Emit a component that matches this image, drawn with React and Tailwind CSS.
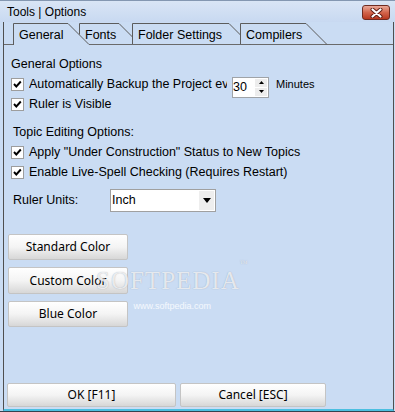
import React from 'react'

const TABS = [
  { label: 'General', w: 55, box: 'w-[77px] ml-[9px] z-20', selected: true },
  { label: 'Fonts', w: 40, box: 'w-[62px] -ml-[11px] z-[3]' },
  { label: 'Folder Settings', w: 97, box: 'w-[119px] -ml-[9px] z-[4]' },
  { label: 'Compilers', w: 66, box: 'w-[88px] -ml-[11px] z-[5]' },
]

function Tab({ label, w, box, selected }) {
  const h = selected ? 23 : 22
  return (
    <div className={`relative h-[23px] shrink-0 flex items-center pl-[6px] pt-[3px] ${box}`}>
      <svg className="absolute left-0 top-0" width={w + 22} height="23">
        <path d={`M0,${h} L0,1 L${w},1 L${w + 21},22 L${w + 21},${h} Z`} fill="#cadcf3" />
        <path d={`M0.5,${h} L0.5,1.5 L${w},1.5 L${w + 21},22.5`} fill="none" stroke="#5c5c5c" />
      </svg>
      <span className="relative text-[12.5px] leading-none">{label}</span>
    </div>
  )
}

function CheckBox() {
  return (
    <div className="w-[13px] h-[13px] shrink-0 bg-white border border-[#9d9d9d] flex items-center justify-center">
      <svg width="11" height="11" viewBox="0 0 11 11">
        <path d="M2,5 L4.3,7.5 L8.8,2.5" fill="none" stroke="#000" strokeWidth="1.9" />
      </svg>
    </div>
  )
}

function CheckRow({ children }) {
  return (
    <div className="h-[20px] flex items-center gap-[5px] text-[12.5px] whitespace-nowrap">
      <CheckBox />
      {children}
    </div>
  )
}

function WinButton({ children, className }) {
  return (
    <button
      className={`flex items-center justify-center border border-[#c4c4c4] rounded-[2px] bg-gradient-to-b from-white via-[#f4f4f4] to-[#d7d7d7] text-[12px] text-black font-['Noto_Sans',sans-serif] ${className}`}
    >
      {children}
    </button>
  )
}

export default function App() {
  return (
    <div className="relative w-[395px] h-[412px] flex flex-col overflow-hidden bg-[#cadcf3] border-b border-[#34424f] font-['Liberation_Sans',Arial,sans-serif] text-black">
      {/* title bar */}
      <div className="h-[22px] shrink-0 flex items-center justify-between pl-[7px] pr-[5px] border-t border-[#8497b1] bg-gradient-to-b from-[#d9e5f5] to-[#c8d9f1]">
        <span className="text-[12px] leading-none">Tools | Options</span>
        <button className="w-[28px] h-[15px] mt-[2px] flex items-center justify-center rounded-[3px] border border-[#6e2b20] bg-gradient-to-b from-[#e9a898] via-[#d2654c] to-[#b8381f]">
          <svg width="13" height="10" viewBox="0 0 13 10">
            <path d="M2.5,1.5 L10.5,8.5 M10.5,1.5 L2.5,8.5" stroke="#5a1a10" strokeWidth="4" strokeLinecap="round" />
            <path d="M2.5,1.5 L10.5,8.5 M10.5,1.5 L2.5,8.5" stroke="#fff" strokeWidth="2.2" strokeLinecap="round" />
          </svg>
        </button>
      </div>

      <div className="flex-1 flex flex-col ml-[3px] mr-[1px] border-l border-r border-[#4f4f4f] border-b-2 border-b-[#4cbfe0]">
        {/* tab strip */}
        <div className="h-[23px] shrink-0 flex items-start border-b border-[#6a6a6a]">
          {TABS.map((t) => (
            <Tab key={t.label} {...t} />
          ))}
        </div>

        {/* general options */}
        <div className="flex flex-col pl-[7px] pt-[9px]">
          <div className="h-[20px] flex items-center text-[12.5px]">General Options</div>
          <CheckRow>
            <span className="w-[198px] overflow-hidden text-clip">Automatically Backup the Project every</span>
            <div className="relative top-[3px] w-[37px] h-[21px] shrink-0 flex bg-white border border-[#9fa3a7]">
              <span className="flex-1 text-[12.5px] leading-[19px]">30</span>
              <div className="w-[12px] my-[1px] mr-[1px] flex flex-col gap-[1px]">
                <div className="flex-1 bg-[#ededed] flex items-center justify-center">
                  <svg width="5" height="3"><path d="M2.5,0 L5,3 L0,3 Z" fill="#000" /></svg>
                </div>
                <div className="flex-1 bg-[#ededed] flex items-center justify-center">
                  <svg width="5" height="3"><path d="M0,0 L5,0 L2.5,3 Z" fill="#000" /></svg>
                </div>
              </div>
            </div>
            <span className="ml-[2px] text-[11px]">Minutes</span>
          </CheckRow>
          <CheckRow>
            <span>Ruler is Visible</span>
          </CheckRow>

          <div className="mt-[8px] ml-[2px] h-[20px] flex items-center text-[12.5px]">Topic Editing Options:</div>
          <CheckRow>
            <span>Apply "Under Construction" Status to New Topics</span>
          </CheckRow>
          <CheckRow>
            <span>Enable Live-Spell Checking (Requires Restart)</span>
          </CheckRow>

          <div className="mt-[7px] ml-[2px] h-[23px] flex items-center text-[12.5px]">
            <span className="w-[97px]">Ruler Units:</span>
            <div className="w-[106px] h-[23px] flex bg-white border border-[#a0a0a0]">
              <span className="flex-1 pl-[1px] leading-[21px]">Inch</span>
              <div className="w-[15px] my-[1px] mr-[1px] bg-[#eeeeee] flex items-center justify-center">
                <svg width="8" height="5"><path d="M0,0 L8,0 L4,5 Z" fill="#000" /></svg>
              </div>
            </div>
          </div>
        </div>

        {/* color buttons */}
        <div className="flex flex-col gap-[7px] pl-[4px] mt-[22px]">
          <WinButton className="w-[120px] h-[26px]">Standard Color</WinButton>
          <WinButton className="w-[120px] h-[27px]">Custom Color</WinButton>
          <WinButton className="w-[120px] h-[26px]">Blue Color</WinButton>
        </div>

        {/* footer buttons */}
        <div className="mt-auto mb-[2px] pl-[3px] flex gap-[4px]">
          <WinButton className="w-[169px] h-[24px]">OK [F11]</WinButton>
          <WinButton className="w-[146px] h-[24px]">Cancel [ESC]</WinButton>
        </div>
      </div>

      {/* watermark */}
      <div className="absolute left-[96px] top-[268px] flex flex-col items-center pointer-events-none">
        <span className="text-[25px] leading-none tracking-[1px] font-['Liberation_Serif',serif] text-white/75 [text-shadow:0_0_1px_rgba(110,120,140,0.6)]">
          SOFTPEDIA<sup className="text-[8px] align-top">™</sup>
        </span>
        <span className="mt-[9px] text-[9px] leading-none font-['Liberation_Sans',sans-serif] text-white/80">www.softpedia.com</span>
      </div>
    </div>
  )
}
